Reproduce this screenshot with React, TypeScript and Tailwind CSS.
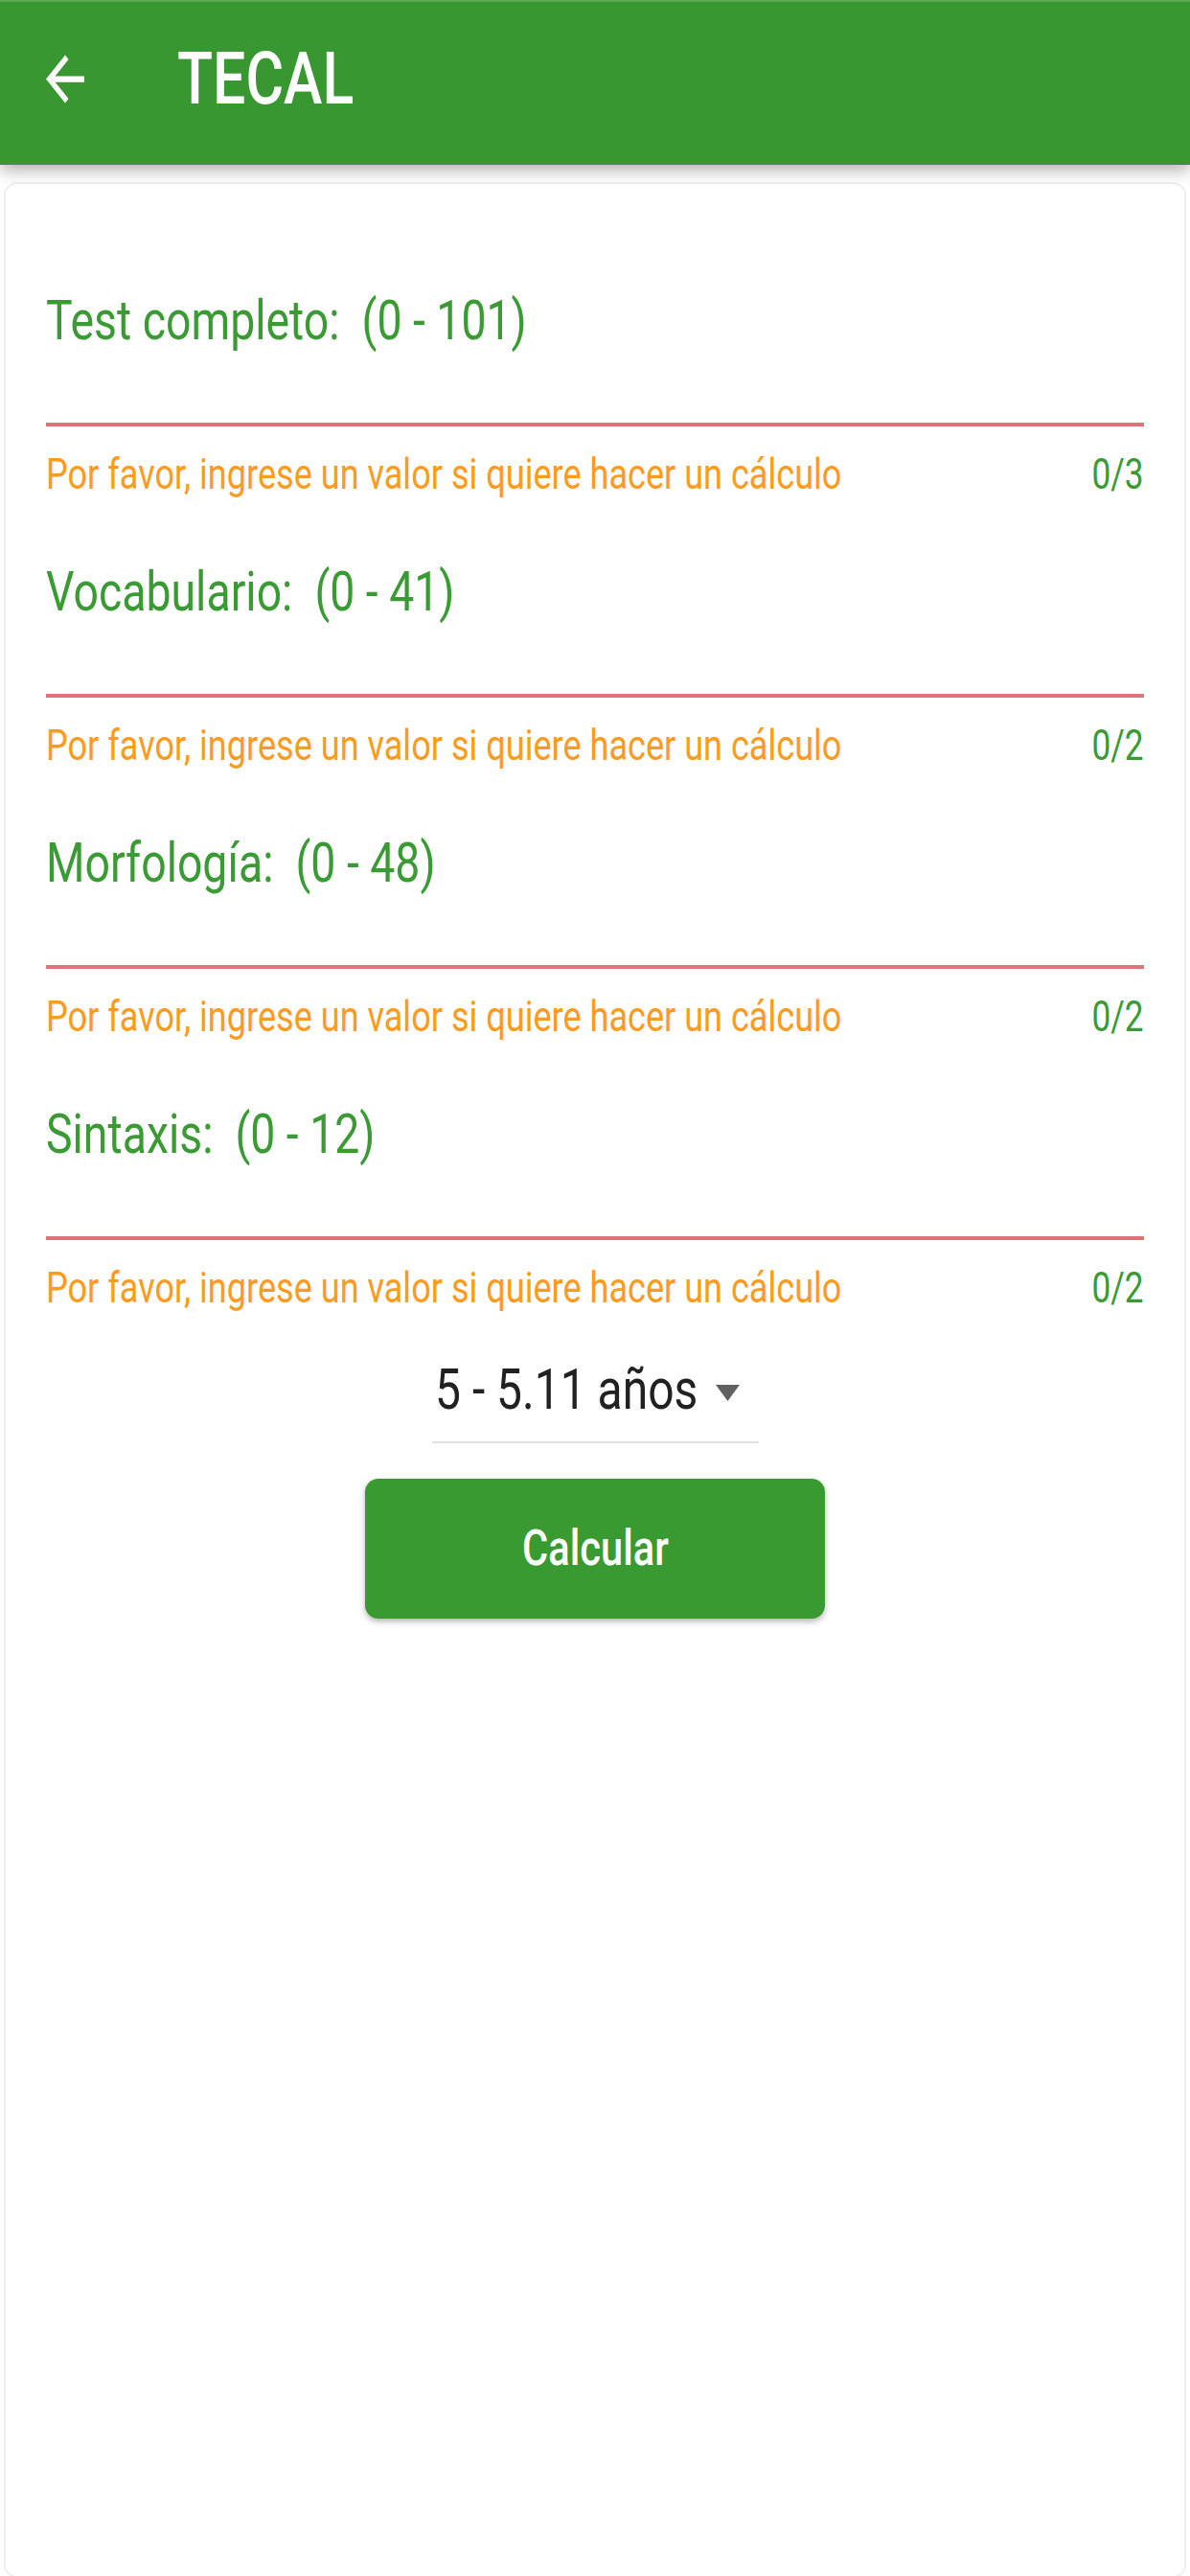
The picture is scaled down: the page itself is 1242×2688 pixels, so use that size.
const rows = [
  { label: 'Test completo:', range: '(0 - 101)', count: '0/3' },
  { label: 'Vocabulario:', range: '(0 - 41)', count: '0/2' },
  { label: 'Morfología:', range: '(0 - 48)', count: '0/2' },
  { label: 'Sintaxis:', range: '(0 - 12)', count: '0/2' },
];

function Field({ label, range, count }: { label: string; range: string; count: string }) {
  return (
    <div>
      <div className="h-[58px] text-[58px] leading-[58px] text-[#3a9a33] whitespace-pre">
        <span className="inline-block origin-left scale-x-[0.8]">
          {label}  {range}
        </span>
      </div>
      <div className="mt-[78px] h-[4px] bg-[#e2727a]" />
      <div className="mt-[28px] flex h-[44px] justify-between text-[44px] leading-[44px]">
        <span className="inline-block origin-left scale-x-[0.82] whitespace-nowrap text-[#fd9a20]">
          Por favor, ingrese un valor si quiere hacer un cálculo
        </span>
        <span className="inline-block origin-right scale-x-[0.8] text-[#3a9a33]">{count}</span>
      </div>
    </div>
  );
}

export default function App() {
  return (
    <div className="relative h-[2688px] overflow-hidden bg-white font-['Roboto',sans-serif]">
      <header className="relative z-10 flex h-[172px] items-center border-t-2 border-[#5aa852] bg-[#399731] pb-[10px] shadow-[0_6px_16px_rgba(0,0,0,0.3)]">
        <svg
          viewBox="0 0 24 24"
          preserveAspectRatio="none"
          className="ml-[38px] h-[75px] w-[60px] fill-white"
        >
          <path d="M20 11H7.83l5.59-5.59L12 4l-8 8 8 8 1.41-1.41L7.83 13H20v-2z" />
        </svg>
        <h1 className="ml-[87px] text-[76px] font-medium leading-[76px] text-white">
          <span className="inline-block origin-left scale-x-[0.8]">TECAL</span>
        </h1>
      </header>

      <main className="mx-[4px] mt-[18px] h-[2500px] rounded-[14px] border-2 border-[#efefef] px-[42px] pt-[113px]">
        <div className="flex flex-col gap-[71px]">
          {rows.map((row) => (
            <Field key={row.label} {...row} />
          ))}
        </div>

        <div className="mx-auto mt-[54px] flex h-[86px] w-[341px] items-start justify-between border-b-2 border-[#e0e0e0] pl-[3px] pr-[20px]">
          <span className="inline-block w-[270px] min-w-0 origin-left scale-x-[0.8] whitespace-nowrap text-[60px] leading-[60px] text-[#212121]">
            5 - 5.11 años
          </span>
          <svg viewBox="0 0 25 17" className="mt-[25px] h-[17px] w-[25px] shrink-0 fill-[#616161]">
            <polygon points="0,0 25,0 12.5,17" />
          </svg>
        </div>

        <button className="mx-auto mt-[37px] flex h-[146px] w-[480px] items-center justify-center rounded-[14px] bg-[#3a9a32] shadow-[0_3px_6px_rgba(0,0,0,0.3)]">
          <span className="inline-block scale-x-[0.8] text-[52px] font-medium leading-[52px] text-white">
            Calcular
          </span>
        </button>
      </main>
    </div>
  );
}
